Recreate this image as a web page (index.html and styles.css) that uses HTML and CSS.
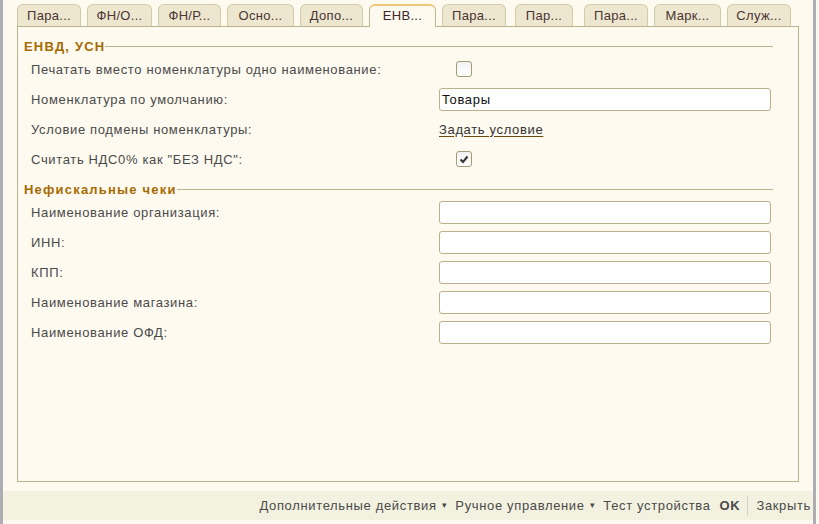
FILE: index.html
```html
<!DOCTYPE html>
<html lang="ru">
<head>
<meta charset="utf-8">
<title>ЕНВД</title>
<link rel="stylesheet" href="styles.css">
</head>
<body>
<div class="app">
  <div class="leftbar"></div>
  <div class="main">
    <div class="tabs">
      <div class="tab" style="width:64px">Пара...</div>
      <div class="tab" style="width:65px">ФН/О...</div>
      <div class="tab" style="width:63px">ФН/Р...</div>
      <div class="tab" style="width:67px">Осно...</div>
      <div class="tab" style="width:63px">Допо...</div>
      <div class="tab active" style="width:67px">ЕНВ...</div>
      <div class="tab" style="width:64px">Пара...</div>
      <div class="tab wide-gap" style="width:58px">Пар...</div>
      <div class="tab wider-gap" style="width:64px">Пара...</div>
      <div class="tab" style="width:67px">Марк...</div>
      <div class="tab" style="width:64px">Служ...</div>
    </div>
    <div class="panel">
      <div class="section first"><span class="section-title">ЕНВД, УСН</span><span class="section-line"></span></div>
      <div class="row">
        <div class="label">Печатать вместо номенклатуры одно наименование:</div>
        <div class="field"><span class="check"></span></div>
      </div>
      <div class="row">
        <div class="label">Номенклатура по умолчанию:</div>
        <div class="field"><div class="input">Товары</div></div>
      </div>
      <div class="row">
        <div class="label">Условие подмены номенклатуры:</div>
        <div class="field"><a class="link">Задать условие</a></div>
      </div>
      <div class="row">
        <div class="label">Считать НДС0% как "БЕЗ НДС":</div>
        <div class="field"><span class="check checked"><svg width="10" height="9" viewBox="0 0 10 9"><path d="M1.5 4.5 L4 7 L8.5 1.5" fill="none" stroke="#333" stroke-width="2"/></svg></span></div>
      </div>
      <div class="section second"><span class="section-title">Нефискальные чеки</span><span class="section-line"></span></div>
      <div class="row">
        <div class="label">Наименование организация:</div>
        <div class="field"><div class="input"></div></div>
      </div>
      <div class="row">
        <div class="label">ИНН:</div>
        <div class="field"><div class="input"></div></div>
      </div>
      <div class="row">
        <div class="label">КПП:</div>
        <div class="field"><div class="input"></div></div>
      </div>
      <div class="row">
        <div class="label">Наименование магазина:</div>
        <div class="field"><div class="input"></div></div>
      </div>
      <div class="row">
        <div class="label">Наименование ОФД:</div>
        <div class="field"><div class="input"></div></div>
      </div>
    </div>
    <div class="footer">
      <span class="fbtn">Дополнительные действия<span class="caret">▾</span></span>
      <span class="fbtn">Ручное управление<span class="caret">▾</span></span>
      <span class="fbtn">Тест устройства</span>
      <span class="fbtn ok">OK</span>
      <span class="fsep"></span>
      <span class="fbtn">Закрыть</span>
    </div>
  </div>
  <div class="rightbar"></div>
  <div class="rightpad"></div>
</div>
</body>
</html>
```
FILE: styles.css
```css
html, body {
  margin: 0;
  padding: 0;
}
body {
  background: #fffaf0;
  font-family: "Liberation Sans", Arial, sans-serif;
  font-size: 13px;
  letter-spacing: 0.65px;
  color: #4a4a4a;
}
.app {
  display: flex;
  width: 819px;
  height: 524px;
  overflow: hidden;
}
.leftbar {
  width: 3px;
  background: #adadb3;
}
.rightbar {
  width: 3px;
  background: #adadb3;
}
.rightpad {
  width: 3px;
  background: #fffaf0;
}
.main {
  flex: 1;
  display: flex;
  flex-direction: column;
  background: #fffaf0;
}
.tabs {
  display: flex;
  gap: 6px;
  padding-left: 14px;
  padding-top: 4px;
  height: 22px;
  align-items: flex-end;
}
.tab {
  box-sizing: border-box;
  height: 22px;
  border: 1px solid #d3caa8;
  border-bottom: none;
  border-radius: 6px 6px 0 0;
  background: #ede7d0;
  color: #4b3434;
  text-align: center;
  line-height: 21px;
  white-space: nowrap;
  overflow: hidden;
  letter-spacing: 0.3px;
}
.tab.wide-gap {
  margin-left: 3px;
}
.tab.wider-gap {
  margin-left: 5px;
}
.tab.active {
  height: 23px;
  margin-bottom: -1px;
  background: #fffaf0;
  border-color: #c0b690;
  border-top: 2px solid #f1c77a;
  position: relative;
  z-index: 1;
  color: #3c2828;
  line-height: 20px;
}
.panel {
  box-sizing: border-box;
  margin-left: 14px;
  width: 782px;
  height: 456px;
  border: 1px solid #bdb38a;
  padding: 11px 25px 0 6px;
}
.section {
  display: flex;
  align-items: center;
  height: 16px;
}
.section.second {
  margin-top: 7px;
}
.section-title {
  font-weight: bold;
  color: #a66a00;
  font-size: 13px;
  letter-spacing: 1.2px;
}
.section-line {
  flex: 1;
  height: 1px;
  background: #bdb38a;
  margin-top: 1px;
}
.row {
  display: grid;
  grid-template-columns: 408px 332px;
  height: 30px;
  align-items: center;
  padding-left: 7px;
}
.label {
  color: #4a4a4a;
  white-space: nowrap;
}
.field {
  display: flex;
  align-items: center;
}
.input {
  box-sizing: border-box;
  width: 332px;
  height: 23px;
  border: 1px solid #bcb088;
  border-radius: 3px;
  background: #ffffff;
  color: #111;
  padding-left: 2px;
  line-height: 21px;
  font-size: 13px;
}
.check {
  box-sizing: border-box;
  width: 16px;
  height: 16px;
  margin-left: 17px;
  border: 1px solid #a39a78;
  border-radius: 3px;
  background: linear-gradient(#f2f2f2, #ffffff);
  display: flex;
  align-items: center;
  justify-content: center;
}
.link {
  color: #333;
  text-decoration: underline;
  text-decoration-color: #6b4a10;
  text-underline-offset: 2px;
  cursor: pointer;
}
.footer {
  margin-top: 9px;
  height: 29px;
  background: #f3f2e1;
  display: flex;
  align-items: center;
  justify-content: flex-end;
  padding-right: 2px;
  color: #4a4a4a;
}
.fbtn {
  margin-left: 8px;
  white-space: nowrap;
}
.fbtn:first-child {
  margin-left: 0;
}
.caret {
  font-size: 9px;
  vertical-align: 2px;
  margin-left: 5px;
}
.ok {
  font-weight: bold;
  margin-left: 9px;
}
.fsep {
  width: 1px;
  height: 20px;
  background: #d6d3c0;
  margin-left: 7px;
}
```
